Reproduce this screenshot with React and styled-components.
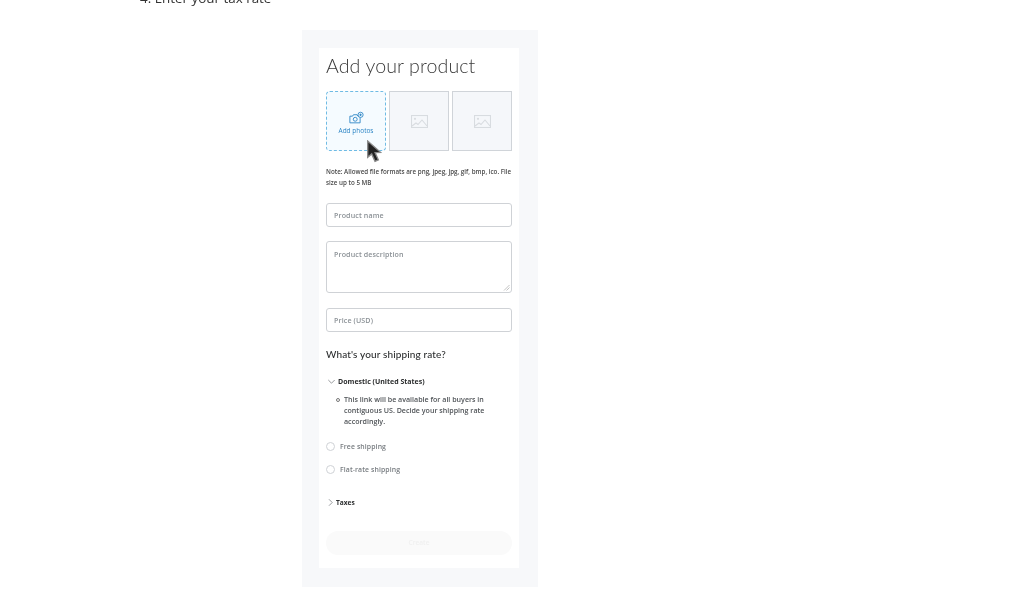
import { createGlobalStyle, styled } from "styled-components";

const GlobalStyle = createGlobalStyle`
  html, body {
    margin: 0;
    height: 616px;
    overflow: hidden;
    background: #fff;
  }
`;

const Page = styled.div`
  width: 1024px;
  height: 616px;
  overflow: hidden;
  font-family: "Open Sans", sans-serif;
`;

const Step = styled.p`
  margin: -9px 0 0 140px;
  height: 14px;
  font-size: 13.4px;
  line-height: 14px;
  color: #333;
  filter: blur(0.35px);
`;

const Frame = styled.div`
  width: 236px;
  height: 557px;
  margin: 25px 0 0 302px;
  padding: 18px 19px 19px 17px;
  box-sizing: border-box;
  background: #f7f8fa;
  filter: blur(0.45px);
`;

const Card = styled.div`
  height: 520px;
  padding: 0 7px;
  box-sizing: border-box;
  background: #fff;
  display: flex;
  flex-direction: column;
`;

const Title = styled.h1`
  margin: 5px 0 0;
  font-family: Lato, sans-serif;
  font-weight: 300;
  font-size: 19.6px;
  line-height: 26px;
  letter-spacing: 0.1px;
  color: #3a3a3a;
`;

const Thumbs = styled.div`
  display: grid;
  grid-template-columns: repeat(3, 60px);
  justify-content: space-between;
  margin-top: 12px;
`;

const AddThumb = styled.div`
  height: 60px;
  box-sizing: border-box;
  border: 1px dashed #6fbbe4;
  border-radius: 4px;
  background: #f5fbff;
  color: #2c85c5;
  display: flex;
  flex-direction: column;
  align-items: center;
  gap: 2px;
  padding-top: 19px;
  font-size: 6.5px;
  line-height: 9px;
  position: relative;
`;

const PhotoGlyph = styled.svg`
  margin-left: 2px;
`;

const Thumb = styled.div`
  height: 60px;
  box-sizing: border-box;
  border: 1px solid #d0d4d9;
  background: #f5f7fa;
  display: flex;
  align-items: center;
  justify-content: center;
`;

const Cursor = styled.svg`
  position: absolute;
  left: 39px;
  top: 48px;
  width: 18px;
  height: 24px;
`;

const Note = styled.p`
  margin: 15px -3px 0 0;
  font-size: 6.25px;
  font-weight: 600;
  line-height: 11.4px;
  color: #4a4a4a;
`;

const Input = styled.div`
  height: ${(p) => p.$h}px;
  margin-top: ${(p) => p.$mt}px;
  box-sizing: border-box;
  border: 1px solid #cfd2d6;
  border-radius: 3px;
  padding: ${(p) => p.$pt}px 7px 0;
  font-size: 7.1px;
  font-weight: 600;
  line-height: 10px;
  letter-spacing: 0.12px;
  color: #8b9196;
  position: relative;
`;

const Grip = styled.svg`
  position: absolute;
  right: 1px;
  bottom: 1px;
  width: 7px;
  height: 7px;
`;

const Heading = styled.h2`
  margin: 15px 0 0;
  font-family: Lato, sans-serif;
  font-size: 10px;
  font-weight: 500;
  line-height: 14px;
  letter-spacing: 0.13px;
  color: #2c2e2f;
`;

const SectionRow = styled.div`
  display: flex;
  align-items: center;
  gap: ${(p) => p.$gap}px;
  margin: ${(p) => p.$mt}px 0 0 ${(p) => p.$ml}px;
  font-size: ${(p) => p.$size}px;
  font-weight: 700;
  line-height: 10px;
  color: #2c2e2f;
  svg {
    margin: -1px 0 0 -1px;
  }
`;

const Bullets = styled.ul`
  margin: 7px 0 0;
  padding: 0 24px 0 18px;
  list-style: none;
  font-size: 7.1px;
  font-weight: 600;
  line-height: 11.2px;
  color: #4f5357;
  position: relative;
  &::before {
    content: "";
    position: absolute;
    left: 10px;
    top: 4px;
    width: 2px;
    height: 2px;
    border: 0.6px solid #777;
    border-radius: 50%;
  }
`;

const Radio = styled.label`
  display: flex;
  align-items: center;
  gap: 5px;
  margin-top: ${(p) => p.$mt}px;
  font-size: 6.9px;
  font-weight: 600;
  line-height: 10px;
  letter-spacing: 0.1px;
  color: #777c80;
  &::before {
    content: "";
    width: 9px;
    height: 9px;
    margin-top: -1px;
    box-sizing: border-box;
    border: 1px solid #cfd2d6;
    border-radius: 50%;
  }
`;

const CreateButton = styled.div`
  height: 24px;
  margin-top: 23px;
  border-radius: 12px;
  background: #fafafa;
  color: #f0f0f0;
  font-size: 6.6px;
  font-weight: 600;
  line-height: 24px;
  text-align: center;
`;

const PhotoIcon = () => (
  <PhotoGlyph width="16" height="13" viewBox="0 0 18 14" fill="none" stroke="#2c85c5" strokeWidth="1">
    <path d="M1 5.5h3l1-1.6h4l1 1.6h2.5v7.5H1z" />
    <circle cx="7" cy="9" r="2.2" />
    <circle cx="13" cy="4" r="2.9" fill="#f5fbff" />
    <path d="M13 2.6v2.8M11.6 4h2.8" />
  </PhotoGlyph>
);

const ImageIcon = () => (
  <svg width="17" height="13" viewBox="0 0 17 13" fill="none" stroke="#d8dce0" strokeWidth="1.1">
    <rect x="0.5" y="0.5" width="16" height="12" />
    <circle cx="4" cy="3.8" r="1.1" fill="#d8dce0" stroke="none" />
    <path d="M1 11l4-3 2 1.5L11 5l5 6" />
  </svg>
);

const Chevron = ({ open }) => (
  <svg width="7" height="7" viewBox="0 0 7 7" fill="none" stroke="#6b6f73" strokeWidth="0.7">
    <path d={open ? "M0.3 2l3.2 3.2L6.7 2" : "M2 0.3l3.2 3.2L2 6.7"} />
  </svg>
);

export default function App() {
  return (
    <Page>
      <GlobalStyle />
      <Step>4. Enter your tax rate</Step>
      <Frame>
        <Card>
          <Title>Add your product</Title>
          <Thumbs>
            <AddThumb>
              <PhotoIcon />
              Add photos
              <Cursor viewBox="0 0 17 23">
                <path d="M1.5 1v15.5l3.8-3.2 3.2 7.2 3.2-1.5-3.1-6.9 5.2-.3z" fill="#222" stroke="#8a8a8a" strokeWidth="1.3" />
              </Cursor>
            </AddThumb>
            <Thumb><ImageIcon /></Thumb>
            <Thumb><ImageIcon /></Thumb>
          </Thumbs>
          <Note>Note: Allowed file formats are png, jpeg, jpg, gif, bmp, ico. File size up to 5 MB</Note>
          <Input $h={24} $mt={14} $pt={6}>Product name</Input>
          <Input $h={52} $mt={14} $pt={7}>
            Product description
            <Grip viewBox="0 0 7 7" stroke="#9a9a9a" strokeWidth="0.6">
              <path d="M6.5 1L1 6.5M6.5 3.5L3.5 6.5" />
            </Grip>
          </Input>
          <Input $h={24} $mt={15} $pt={6}>Price (USD)</Input>
          <Heading>What's your shipping rate?</Heading>
          <SectionRow $mt={16} $ml={3} $gap={3} $size={7}>
            <Chevron open />
            Domestic (United States)
          </SectionRow>
          <Bullets>
            <li>This link will be available for all buyers in contiguous US. Decide your shipping rate accordingly.</li>
          </Bullets>
          <Radio $mt={15}>Free shipping</Radio>
          <Radio $mt={13}>Flat-rate shipping</Radio>
          <SectionRow $mt={23} $ml={2} $gap={2} $size={6.6}>
            <Chevron />
            Taxes
          </SectionRow>
          <CreateButton>Create</CreateButton>
        </Card>
      </Frame>
    </Page>
  );
}
